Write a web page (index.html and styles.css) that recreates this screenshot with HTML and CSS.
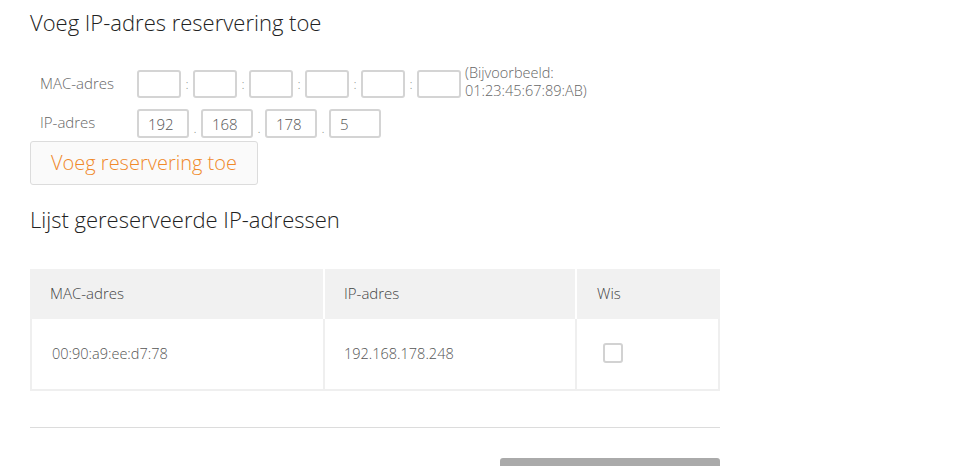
FILE: index.html
```html
<!DOCTYPE html>
<html lang="nl">
<head>
<meta charset="utf-8">
<title>IP-adres reservering</title>
<link rel="stylesheet" href="styles.css">
</head>
<body>
<main class="page">
  <h1 class="title">Voeg IP-adres reservering toe</h1>
  <div class="form-row mac-row">
    <div class="label">MAC-adres</div>
    <div class="fields">
      <input class="box mac" type="text"><span class="sep">:</span>
      <input class="box mac" type="text"><span class="sep">:</span>
      <input class="box mac" type="text"><span class="sep">:</span>
      <input class="box mac" type="text"><span class="sep">:</span>
      <input class="box mac" type="text"><span class="sep">:</span>
      <input class="box mac" type="text">
    </div>
    <div class="hint">(Bijvoorbeeld:<br>01:23:45:67:89:AB)</div>
  </div>
  <div class="form-row ip-row">
    <div class="label">IP-adres</div>
    <div class="fields">
      <input class="box ip" type="text" value="192"><span class="sep dot">.</span>
      <input class="box ip" type="text" value="168"><span class="sep dot">.</span>
      <input class="box ip" type="text" value="178"><span class="sep dot">.</span>
      <input class="box ip" type="text" value="5">
    </div>
  </div>
  <button class="add-btn" type="button">Voeg reservering toe</button>

  <h2 class="title sub">Lijst gereserveerde IP-adressen</h2>
  <div class="table">
    <div class="thead">
      <div class="th">MAC-adres</div>
      <div class="th">IP-adres</div>
      <div class="th">Wis</div>
    </div>
    <div class="trow">
      <div class="td">00:90:a9:ee:d7:78</div>
      <div class="td">192.168.178.248</div>
      <div class="td check-cell"><span class="checkbox"></span></div>
    </div>
  </div>
  <hr class="divider">
  <div class="actions"><div class="save-btn"></div></div>
</main>
</body>
</html>
```
FILE: styles.css
```css
html, body {
  margin: 0;
  padding: 0;
  background: #fff;
  overflow: hidden;
}
body {
  font-family: "Open Sans", "Noto Sans", sans-serif;
  font-weight: 300;
  color: #555;
}
.page {
  padding: 7px 0 0 30px;
  width: 690px;
}
.title {
  margin: 0;
  font-size: 22px;
  line-height: 30px;
  font-weight: 300;
  color: #222;
}
.form-row {
  display: flex;
  align-items: flex-start;
}
.mac-row {
  margin-top: 27px;
  height: 36px;
}
.ip-row {
  margin-top: 9px;
}
.label {
  flex: none;
  width: 107px;
  padding-left: 10px;
  box-sizing: border-box;
  font-size: 15px;
  line-height: 26px;
  color: #666;
  margin-top: 6px;
}
.ip-row .label { margin-top: 0; }
.fields {
  display: flex;
  align-items: center;
}
.mac-row .fields { margin-top: 6px; }
.box {
  box-sizing: border-box;
  border: 2px solid #d4d4d4;
  border-radius: 3px;
  background: #fff;
  font-family: inherit;
  font-weight: 300;
  font-size: 15px;
  color: #555;
  padding: 0 0 0 9px;
  margin: 0;
  outline: none;
}
.mac { width: 44px; height: 28px; }
.ip { width: 52px; height: 29px; }
.sep {
  width: 12px;
  text-align: center;
  font-size: 13px;
  color: #888;
}
.dot { width: 12px; padding-top: 8px; }
.hint {
  margin-left: 4px;
  font-size: 14.5px;
  line-height: 18px;
  color: #666;
}
.add-btn {
  display: block;
  margin-top: 3px;
  width: 228px;
  height: 44px;
  box-sizing: border-box;
  border: 1px solid #dcdcdc;
  border-radius: 3px;
  background: #fafafa;
  color: #f0892a;
  font-family: inherit;
  font-weight: 300;
  font-size: 20px;
  text-align: left;
  padding: 0 0 2px 20px;
}
.sub { margin-top: 19px; }
.table {
  margin-top: 35px;
  width: 690px;
  font-size: 15px;
}
.thead {
  display: grid;
  grid-template-columns: 293px 250px 1fr;
  column-gap: 2px;
  height: 50px;
}
.th {
  background: #f1f1f1;
  padding-left: 20px;
  line-height: 48px;
  color: #444;
}
.th:nth-child(2) { padding-left: 19px; }
.trow {
  display: grid;
  grid-template-columns: 291px 250px 1fr;
  column-gap: 2px;
  background: #efefef;
  padding: 0 2px 2px 2px;
}
.td {
  background: #fff;
  height: 70px;
  padding-left: 20px;
  line-height: 70px;
  font-size: 14.5px;
  color: #555;
}
.td:nth-child(2) { padding-left: 19px; }
.check-cell {
  display: flex;
  align-items: center;
  padding-left: 26px;
}
.checkbox {
  width: 20px;
  height: 20px;
  box-sizing: border-box;
  border: 2px solid #d2d2d2;
  border-radius: 3px;
  margin-top: -2px;
}
.divider {
  margin: 36px 0 0 0;
  border: 0;
  border-top: 1px solid #dcdcdc;
  width: 690px;
}
.actions {
  display: flex;
  justify-content: flex-end;
  margin-top: 30px;
}
.save-btn {
  width: 220px;
  height: 44px;
  background: #aaa;
  border-radius: 3px;
}
```
